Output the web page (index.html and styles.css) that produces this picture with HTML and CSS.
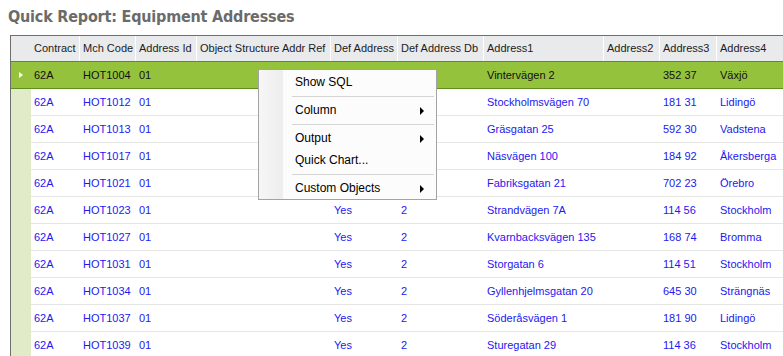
FILE: index.html
```html
<!DOCTYPE html>
<html lang="en">
<head>
  <meta charset="UTF-8">
  <title>Quick Report: Equipment Addresses</title>
  <link rel="stylesheet" href="styles.css">
</head>
<body>

  <h1 class="title">Quick Report: Equipment Addresses</h1>

  <!-- REPORT GRID -->
  <div class="grid">
    <div class="row head">
      <div class="cell ind"></div>
      <div class="cell">Contract</div>
      <div class="cell">Mch Code</div>
      <div class="cell">Address Id</div>
      <div class="cell">Object Structure Addr Ref</div>
      <div class="cell">Def Address</div>
      <div class="cell">Def Address Db</div>
      <div class="cell">Address1</div>
      <div class="cell">Address2</div>
      <div class="cell">Address3</div>
      <div class="cell">Address4</div>
    </div>

    <!-- rows under the context menu leave Def Address cells blank -->
    <div class="row selected">
      <div class="cell ind"><span class="arrow"></span></div>
      <div class="cell">62A</div><div class="cell">HOT1004</div><div class="cell">01</div><div class="cell"></div>
      <div class="cell"></div><div class="cell"></div><div class="cell">Vintervägen 2</div><div class="cell"></div>
      <div class="cell">352 37</div><div class="cell">Växjö</div>
    </div>

    <div class="row">
      <div class="cell ind"></div>
      <div class="cell">62A</div><div class="cell">HOT1012</div><div class="cell">01</div><div class="cell"></div>
      <div class="cell"></div><div class="cell"></div><div class="cell">Stockholmsvägen 70</div><div class="cell"></div>
      <div class="cell">181 31</div><div class="cell">Lidingö</div>
    </div>

    <div class="row">
      <div class="cell ind"></div>
      <div class="cell">62A</div><div class="cell">HOT1013</div><div class="cell">01</div><div class="cell"></div>
      <div class="cell"></div><div class="cell"></div><div class="cell">Gräsgatan 25</div><div class="cell"></div>
      <div class="cell">592 30</div><div class="cell">Vadstena</div>
    </div>

    <div class="row">
      <div class="cell ind"></div>
      <div class="cell">62A</div><div class="cell">HOT1017</div><div class="cell">01</div><div class="cell"></div>
      <div class="cell"></div><div class="cell"></div><div class="cell">Näsvägen 100</div><div class="cell"></div>
      <div class="cell">184 92</div><div class="cell">Åkersberga</div>
    </div>

    <div class="row">
      <div class="cell ind"></div>
      <div class="cell">62A</div><div class="cell">HOT1021</div><div class="cell">01</div><div class="cell"></div>
      <div class="cell"></div><div class="cell"></div><div class="cell">Fabriksgatan 21</div><div class="cell"></div>
      <div class="cell">702 23</div><div class="cell">Örebro</div>
    </div>

    <div class="row">
      <div class="cell ind"></div>
      <div class="cell">62A</div><div class="cell">HOT1023</div><div class="cell">01</div><div class="cell"></div>
      <div class="cell">Yes</div><div class="cell">2</div><div class="cell">Strandvägen 7A</div><div class="cell"></div>
      <div class="cell">114 56</div><div class="cell">Stockholm</div>
    </div>

    <div class="row">
      <div class="cell ind"></div>
      <div class="cell">62A</div><div class="cell">HOT1027</div><div class="cell">01</div><div class="cell"></div>
      <div class="cell">Yes</div><div class="cell">2</div><div class="cell">Kvarnbacksvägen 135</div><div class="cell"></div>
      <div class="cell">168 74</div><div class="cell">Bromma</div>
    </div>

    <div class="row">
      <div class="cell ind"></div>
      <div class="cell">62A</div><div class="cell">HOT1031</div><div class="cell">01</div><div class="cell"></div>
      <div class="cell">Yes</div><div class="cell">2</div><div class="cell">Storgatan 6</div><div class="cell"></div>
      <div class="cell">114 51</div><div class="cell">Stockholm</div>
    </div>

    <div class="row">
      <div class="cell ind"></div>
      <div class="cell">62A</div><div class="cell">HOT1034</div><div class="cell">01</div><div class="cell"></div>
      <div class="cell">Yes</div><div class="cell">2</div><div class="cell">Gyllenhjelmsgatan 20</div><div class="cell"></div>
      <div class="cell">645 30</div><div class="cell">Strängnäs</div>
    </div>

    <div class="row">
      <div class="cell ind"></div>
      <div class="cell">62A</div><div class="cell">HOT1037</div><div class="cell">01</div><div class="cell"></div>
      <div class="cell">Yes</div><div class="cell">2</div><div class="cell">Söderåsvägen 1</div><div class="cell"></div>
      <div class="cell">181 90</div><div class="cell">Lidingö</div>
    </div>

    <div class="row">
      <div class="cell ind"></div>
      <div class="cell">62A</div><div class="cell">HOT1039</div><div class="cell">01</div><div class="cell"></div>
      <div class="cell">Yes</div><div class="cell">2</div><div class="cell">Sturegatan 29</div><div class="cell"></div>
      <div class="cell">114 36</div><div class="cell">Stockholm</div>
    </div>
  </div>

  <!-- CONTEXT MENU -->
  <div class="menu">
    <div class="item">Show SQL</div>
    <div class="sep"></div>
    <div class="item sub">Column</div>
    <div class="sep"></div>
    <div class="item sub">Output</div>
    <div class="item">Quick Chart...</div>
    <div class="sep"></div>
    <div class="item sub">Custom Objects</div>
  </div>

</body>
</html>
```

FILE: styles.css
```css
body {
  font-family: "Liberation Sans", Arial, sans-serif;
  margin: 0;
  padding: 0;
  background: #fff;
  overflow: hidden;
  position: relative;
  height: 356px;
}

.title {
  font-family: "DejaVu Sans Condensed", "Liberation Sans Narrow", sans-serif;
  font-size: 16px;
  font-weight: bold;
  letter-spacing: -0.2px;
  color: #6b6b6b;
  margin: 0;
  height: 35px;
  line-height: 22px;
  padding: 6px 0 0 8px;
  box-sizing: border-box;
}

.grid {
  margin-left: 10px;
  width: 900px;
  border-left: 1px solid #6e6e6e;
  border-top: 1px solid #6e6e6e;
}

.row {
  display: grid;
  grid-template-columns: 20px 49px 56px 61px 134px 67px 86px 120px 56px 57px 90px;
}

.cell {
  box-sizing: border-box;
  font-size: 11px;
  padding-left: 3px;
  white-space: nowrap;
  overflow: hidden;
  height: 27px;
  line-height: 26px;
  color: #2417f2;
  border-bottom: 1px solid #e6e6e6;
}

.cell.ind {
  background: #e2ebc8;
  border-bottom-color: #e2ebc8;
  padding: 0;
}

/* header */
.head .cell {
  height: 25px;
  line-height: 25px;
  background: #e9eaec;
  color: #1c1c1c;
  border-bottom: none;
  border-right: 1px solid #fff;
}

.head .cell.ind {
  border-right: none;
}

/* selected row */
.selected {
  background: #95c23d;
  border-top: 1px solid #5f8d1f;
  border-bottom: 1px solid #5f8d1f;
}

.selected .cell,
.selected .cell.ind {
  background: transparent;
  border-bottom: none;
  height: 26px;
  color: #111;
}

.arrow {
  display: block;
  width: 0;
  height: 0;
  margin: 10px 0 0 8px;
  border-top: 3px solid transparent;
  border-bottom: 3px solid transparent;
  border-left: 4px solid #fff;
}

/* context menu */
.menu {
  position: absolute;
  left: 258px;
  top: 69px;
  width: 179px;
  box-sizing: border-box;
  border: 1px solid #a3a3a3;
  background: linear-gradient(to right, #f6f6f6 0, #ededed 24px, #fcfcfc 24px);
  padding: 1px 1px 0;
}

.item {
  position: relative;
  height: 22px;
  line-height: 22px;
  padding-left: 35px;
  font-size: 12px;
  color: #000;
}

.sub::after {
  content: "";
  position: absolute;
  right: 11px;
  top: 8px;
  border-top: 4px solid transparent;
  border-bottom: 4px solid transparent;
  border-left: 4px solid #000;
}

.sep {
  height: 1px;
  margin: 3px 1px 2px 32px;
  background: #d4d4d4;
}
```
